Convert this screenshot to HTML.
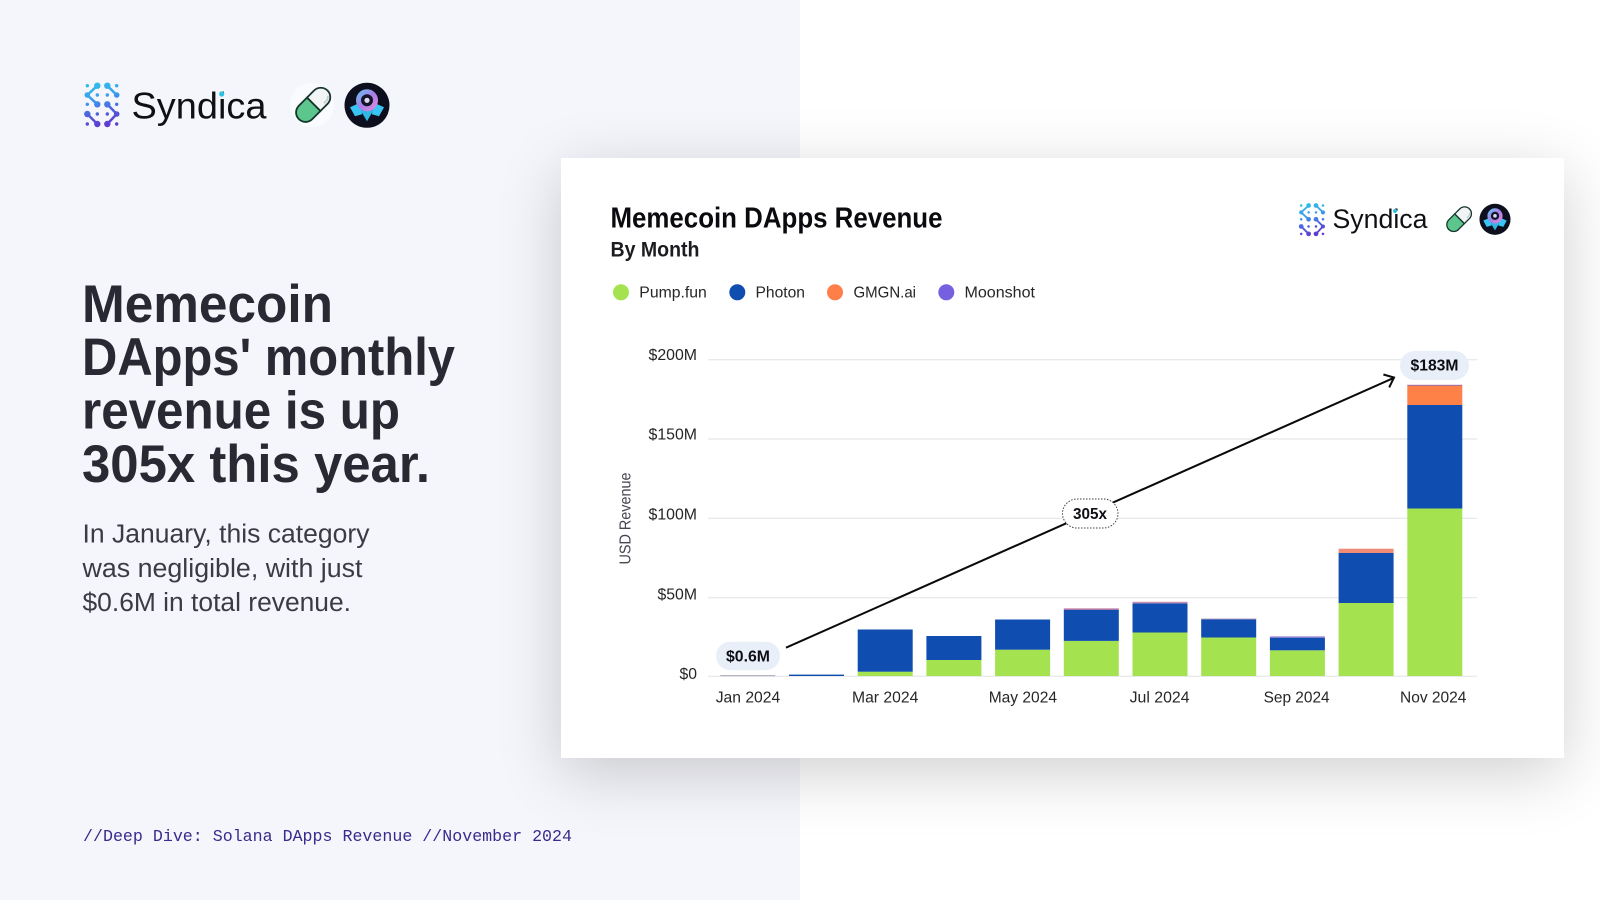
<!DOCTYPE html>
<html lang="en">
<head>
<meta charset="utf-8">
<title>Memecoin DApps Revenue</title>
<style>
html,body{margin:0;padding:0;width:1600px;height:900px;overflow:hidden;background:#fff}
#left{position:absolute;left:0;top:0;width:800px;height:900px;background:#f5f6fb}
#card{position:absolute;left:561px;top:158px;width:1003px;height:600px;background:#fff;box-shadow:0 15px 60px rgba(0,0,0,.19)}
svg{position:absolute;left:0;top:0}
text{font-family:"Liberation Sans",sans-serif}
.t{font-size:16px;fill:#262626}
.b{font-size:15.5px;font-weight:700;fill:#0d0d14}
</style>
</head>
<body>
<div id="left"></div>
<div id="card"></div>
<svg width="1600" height="900" viewBox="0 0 1600 900" xmlns="http://www.w3.org/2000/svg">
<defs>
<linearGradient id="lg" gradientUnits="userSpaceOnUse" x1="0" y1="0" x2="12" y2="44">
<stop offset="0" stop-color="#2ec4e6"/><stop offset=".4" stop-color="#3a9cf0"/><stop offset=".7" stop-color="#4f62dc"/><stop offset="1" stop-color="#5f3ccf"/>
</linearGradient>
<linearGradient id="rg" x1="0" y1="0" x2="1" y2="1">
<stop offset="0" stop-color="#6fb8f0"/><stop offset=".5" stop-color="#a97de6"/><stop offset="1" stop-color="#d68ae0"/>
</linearGradient>
<g id="mark">
<g fill="none" stroke="url(#lg)" stroke-width="2.5" stroke-linecap="round">
<path d="M12.3 2.7L2.3 12L12.3 21.3M22.3 2.7L31.7 12M22.3 21.3L31.7 31L22.3 41M2.3 31L12.3 41"/>
</g>
<g fill="url(#lg)">
<circle cx="12.3" cy="2.7" r="3.2"/><circle cx="2.3" cy="12" r="2.8"/><circle cx="12.3" cy="21.3" r="3.2"/>
<circle cx="22.3" cy="2.7" r="3.2"/><circle cx="31.7" cy="12" r="2.8"/>
<circle cx="22.3" cy="21.3" r="3.2"/><circle cx="31.7" cy="31" r="2.8"/><circle cx="22.3" cy="41" r="3.2"/>
<circle cx="2.3" cy="31" r="3.2"/><circle cx="12.3" cy="41" r="3.2"/>
<circle cx="2.3" cy="2.7" r="1.7"/><circle cx="31.7" cy="2.7" r="1.7"/><circle cx="12.3" cy="12" r="1.7"/><circle cx="22.3" cy="12" r="1.7"/>
<circle cx="2.3" cy="21.3" r="1.7"/><circle cx="31.7" cy="21.3" r="1.7"/><circle cx="12.3" cy="31" r="1.7"/><circle cx="22.3" cy="31" r="1.7"/>
<circle cx="2.3" cy="41" r="1.7"/><circle cx="31.7" cy="41" r="1.7"/>
</g>
</g>
<g id="pill">
<g transform="rotate(-45)">
<path d="M1 -9.5H11A9.5 9.5 0 0 1 11 9.5H1Z" fill="#f1f5f5" stroke="#16352c" stroke-width="1.8"/>
<path d="M1 -9.5H-10.5A9.5 9.5 0 0 0 -10.5 9.5H1Z" fill="#5cc68c" stroke="#16352c" stroke-width="1.8"/>
<path d="M9 6.5H12A6.5 6.5 0 0 0 17 4" fill="none" stroke="#c4cccc" stroke-width="1.8"/>
</g>
</g>
<g id="rocket">
<circle r="22.5" fill="#0e0f1e"/>
<path d="M-17 2L-6 -3L-5 9L-12 11Z" fill="#38c4f4"/>
<path d="M17 2L6 -3L5 9L12 11Z" fill="#38c4f4"/>
<path d="M-6.5 5H6.5L0 16Z" fill="#2fb6e2"/>
<circle cx="0" cy="-5" r="8.5" fill="#141528" stroke="url(#rg)" stroke-width="5"/>
<circle cx="0" cy="-5" r="2.6" fill="#dcd8f5"/>
</g>
</defs>

<!-- top-left logos -->
<use href="#mark" x="85" y="83"/>
<text x="131.5" y="118.3" font-size="37" fill="#101014" textLength="135" lengthAdjust="spacingAndGlyphs">Syndica</text>
<circle cx="221.7" cy="94" r="2.6" fill="#2cc2e2"/>
<circle cx="312" cy="105" r="22" fill="#fafbfe"/>
<use href="#pill" x="313" y="105"/>
<use href="#rocket" x="367" y="105.3"/>

<!-- headline -->
<g font-size="53" font-weight="700" fill="#282933">
<text x="82" y="322.2" textLength="251" lengthAdjust="spacingAndGlyphs">Memecoin</text>
<text x="82" y="375" textLength="373" lengthAdjust="spacingAndGlyphs">DApps' monthly</text>
<text x="82" y="428.4" textLength="318" lengthAdjust="spacingAndGlyphs">revenue is up</text>
<text x="82" y="481.9" textLength="348" lengthAdjust="spacingAndGlyphs">305x this year.</text>
</g>
<g font-size="25.5" fill="#3a3b45">
<text x="82.5" y="542.7" textLength="287" lengthAdjust="spacingAndGlyphs">In January, this category</text>
<text x="82.5" y="577.2" textLength="280" lengthAdjust="spacingAndGlyphs">was negligible, with just</text>
<text x="82.5" y="611.2" textLength="268.5" lengthAdjust="spacingAndGlyphs">$0.6M in total revenue.</text>
</g>
<text x="83" y="841" style="font-family:'Liberation Mono',monospace" font-size="16.6" fill="#3a2a8c" textLength="489" lengthAdjust="spacingAndGlyphs">//Deep Dive: Solana DApps Revenue //November 2024</text>

<!-- card header -->
<text x="610.5" y="227.3" font-size="28.5" font-weight="700" fill="#0b0b0f" textLength="332" lengthAdjust="spacingAndGlyphs">Memecoin DApps Revenue</text>
<text x="610.5" y="256.5" font-size="21" font-weight="700" fill="#1b1b20" textLength="89" lengthAdjust="spacingAndGlyphs">By Month</text>

<use href="#mark" transform="translate(1299.5 203.5) scale(.74)"/>
<text x="1332.5" y="228.2" font-size="27" fill="#101014" textLength="95" lengthAdjust="spacingAndGlyphs">Syndica</text>
<circle cx="1395" cy="211" r="2" fill="#2cc2e2"/>
<use href="#pill" transform="translate(1459 219.3) scale(.72)"/>
<use href="#rocket" transform="translate(1495 219.3) scale(.69)"/>

<!-- legend -->
<circle cx="621" cy="292.3" r="8" fill="#a4e34f"/>
<circle cx="737.3" cy="292.3" r="8" fill="#0f4db0"/>
<circle cx="835" cy="292.3" r="8" fill="#fe7f48"/>
<circle cx="946.3" cy="292.3" r="8" fill="#7660e0"/>
<text class="t" x="639.3" y="297.5" textLength="67.5" lengthAdjust="spacingAndGlyphs">Pump.fun</text>
<text class="t" x="755.5" y="297.5" textLength="49.5" lengthAdjust="spacingAndGlyphs">Photon</text>
<text class="t" x="853.5" y="297.5" textLength="62.5" lengthAdjust="spacingAndGlyphs">GMGN.ai</text>
<text class="t" x="964.5" y="297.5" textLength="70.5" lengthAdjust="spacingAndGlyphs">Moonshot</text>

<!-- grid -->
<g stroke="#e9eaec" stroke-width="1.4">
<path d="M708 359.7H1477M708 439H1477M708 518.3H1477M708 597.7H1477M708 676.3H1477"/>
</g>

<!-- y axis -->
<text class="t" x="697" y="360" text-anchor="end" textLength="48.5" lengthAdjust="spacingAndGlyphs">$200M</text>
<text class="t" x="697" y="439.5" text-anchor="end" textLength="48.5" lengthAdjust="spacingAndGlyphs">$150M</text>
<text class="t" x="697" y="519.5" text-anchor="end" textLength="48.5" lengthAdjust="spacingAndGlyphs">$100M</text>
<text class="t" x="697" y="599.5" text-anchor="end" textLength="39.5" lengthAdjust="spacingAndGlyphs">$50M</text>
<text class="t" x="697" y="679" text-anchor="end" textLength="17.5" lengthAdjust="spacingAndGlyphs">$0</text>
<text transform="translate(630.5 564.5) rotate(-90)" font-size="15.5" fill="#444650" textLength="92" lengthAdjust="spacingAndGlyphs">USD Revenue</text>

<!-- bars -->
<g fill="#a4e34f">
<rect x="857.7" y="671.7" width="55" height="4.3"/>
<rect x="926.4" y="660" width="55" height="16"/>
<rect x="995.1" y="649.7" width="55" height="26.3"/>
<rect x="1063.8" y="640.9" width="55" height="35.1"/>
<rect x="1132.5" y="632.5" width="55" height="43.5"/>
<rect x="1201.2" y="637.5" width="55" height="38.5"/>
<rect x="1269.9" y="650.3" width="55" height="25.7"/>
<rect x="1338.6" y="603" width="55" height="73"/>
<rect x="1407.3" y="508.5" width="55" height="167.5"/>
</g>
<g fill="#0f4db0">
<rect x="789" y="674.6" width="55" height="1.4"/>
<rect x="857.7" y="629.5" width="55" height="42.2"/>
<rect x="926.4" y="636" width="55" height="24"/>
<rect x="995.1" y="619.5" width="55" height="30.2"/>
<rect x="1063.8" y="609.7" width="55" height="31.2"/>
<rect x="1132.5" y="603.3" width="55" height="29.2"/>
<rect x="1201.2" y="619.3" width="55" height="18.2"/>
<rect x="1269.9" y="637.7" width="55" height="12.6"/>
<rect x="1338.6" y="553" width="55" height="50"/>
<rect x="1407.3" y="405" width="55" height="103.5"/>
</g>
<rect x="720.3" y="675" width="55" height="1.2" fill="#b4b6c0"/>
<rect x="1063.8" y="608.4" width="55" height="1.3" fill="#c0709a"/>
<rect x="1132.5" y="601.8" width="55" height="1.5" fill="#c78ab4"/>
<rect x="1201.2" y="618.6" width="55" height=".8" fill="#a98ab8"/>
<rect x="1269.9" y="636.4" width="55" height="1.3" fill="#8f7bd0"/>
<rect x="1338.6" y="548.7" width="55" height="4.3" fill="#ef8d76"/>
<rect x="1407.3" y="386" width="55" height="19" fill="#fe8148"/>
<rect x="1407.3" y="384.8" width="55" height="1.2" fill="#a9729a"/>

<!-- x axis -->
<text class="t" x="715.7" y="702.7" textLength="64.5" lengthAdjust="spacingAndGlyphs">Jan 2024</text>
<text class="t" x="852" y="702.7" textLength="66.3" lengthAdjust="spacingAndGlyphs">Mar 2024</text>
<text class="t" x="988.7" y="702.7" textLength="68.3" lengthAdjust="spacingAndGlyphs">May 2024</text>
<text class="t" x="1129.6" y="702.7" textLength="60" lengthAdjust="spacingAndGlyphs">Jul 2024</text>
<text class="t" x="1263.6" y="702.7" textLength="66" lengthAdjust="spacingAndGlyphs">Sep 2024</text>
<text class="t" x="1400" y="702.7" textLength="66.4" lengthAdjust="spacingAndGlyphs">Nov 2024</text>

<!-- arrow -->
<path d="M786 647.7L1394 377.8M1383.4 374.5L1394 377.5L1389.2 387.4" fill="none" stroke="#0a0a0a" stroke-width="2"/>

<!-- pills -->
<rect x="716" y="641.7" width="64" height="28.5" rx="14.2" fill="#e9eff9"/>
<text class="b" x="748" y="661.4" text-anchor="middle" textLength="44" lengthAdjust="spacingAndGlyphs">$0.6M</text>
<rect x="1062.5" y="499" width="55.5" height="29" rx="14.5" fill="#fff" stroke="#3e3e46" stroke-width="1" stroke-dasharray="1.5 1.5"/>
<text class="b" x="1090" y="518.8" text-anchor="middle" textLength="34" lengthAdjust="spacingAndGlyphs">305x</text>
<rect x="1400" y="351" width="69" height="29" rx="14.5" fill="#e9eff9"/>
<text class="b" x="1434.5" y="370.4" text-anchor="middle" textLength="48" lengthAdjust="spacingAndGlyphs">$183M</text>
</svg>
</body>
</html>
